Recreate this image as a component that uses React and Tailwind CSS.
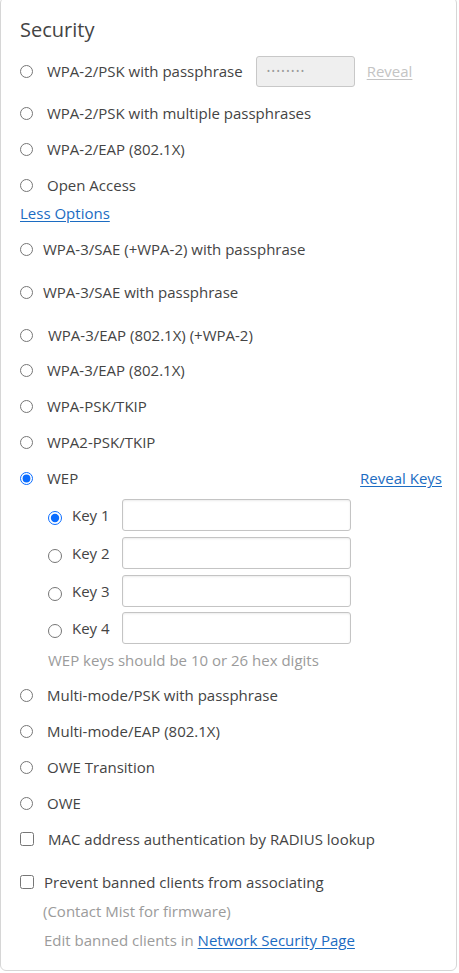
import React, { useState } from 'react';

// Security section of a WLAN settings card.

const FONT = { fontFamily: '"Open Sans", "Liberation Sans", sans-serif' };

function Radio({ checked, onChange, className = '' }) {
  return (
    <input
      type="radio"
      checked={checked}
      onChange={onChange}
      className={`m-0 h-[13px] w-[13px] shrink-0 accent-[#0a6cff] ${className}`}
    />
  );
}

function Option({ id, label, mt, gap = 'ml-[14px]', value, setValue, right }) {
  return (
    <div className={`flex h-[24px] items-center ${mt}`}>
      <Radio checked={value === id} onChange={() => setValue(id)} />
      <span className={`${gap} text-[15px] text-[#444]`}>{label}</span>
      {right}
    </div>
  );
}

export default function App() {
  const [mode, setMode] = useState('wep');
  const [key, setKey] = useState(1);
  const [mac, setMac] = useState(false);
  const [ban, setBan] = useState(false);

  return (
    <div className="min-h-screen bg-white" style={FONT}>
      <div className="-mt-[3px] w-[457px] rounded-md border border-[#d6d6d6] pb-[20px] pl-[19px] pr-[14px] pt-[18px]">
        <div className="flex h-[28px] items-center text-[20px] text-[#444]">Security</div>

        <div className="mt-[11px] flex h-[32px] items-center">
          <Radio checked={mode === 'psk'} onChange={() => setMode('psk')} />
          <span className="ml-[14px] text-[15px] text-[#444]">WPA-2/PSK with passphrase</span>
          <div className="ml-[13px] flex h-[31px] w-[99px] items-center rounded-[3px] border border-[#c8c8c8] bg-[#efefef] pl-[10px] text-[9px] tracking-[1.5px] text-[#9a9a9a]">
            ••••••••
          </div>
          <a className="ml-[12px] text-[15px] text-[#c4c4c4] underline underline-offset-2">Reveal</a>
        </div>

        <Option id="multi" label="WPA-2/PSK with multiple passphrases" mt="mt-[14px]" value={mode} setValue={setMode} />
        <Option id="eap2" label="WPA-2/EAP (802.1X)" mt="mt-[12px]" value={mode} setValue={setMode} />
        <Option id="open" label="Open Access" mt="mt-[12px]" value={mode} setValue={setMode} />

        <div className="mt-[6px] flex h-[20px] items-center">
          <a className="text-[15px] text-[#1c6cc2] underline underline-offset-2">Less Options</a>
        </div>

        <Option id="sae2" label="WPA-3/SAE (+WPA-2) with passphrase" mt="mt-[14px]" gap="ml-[10px]" value={mode} setValue={setMode} />
        <Option id="sae" label="WPA-3/SAE with passphrase" mt="mt-[19px]" gap="ml-[10px]" value={mode} setValue={setMode} />
        <Option id="eap3plus" label="WPA-3/EAP (802.1X) (+WPA-2)" mt="mt-[19px]" gap="ml-[15px]" value={mode} setValue={setMode} />
        <Option id="eap3" label="WPA-3/EAP (802.1X)" mt="mt-[11px]" value={mode} setValue={setMode} />
        <Option id="tkip" label="WPA-PSK/TKIP" mt="mt-[12px]" value={mode} setValue={setMode} />
        <Option id="tkip2" label="WPA2-PSK/TKIP" mt="mt-[12px]" value={mode} setValue={setMode} />
        <Option
          id="wep"
          label="WEP"
          mt="mt-[12px]"
          value={mode}
          setValue={setMode}
          right={<a className="ml-auto text-[15px] text-[#1c6cc2] underline underline-offset-2">Reveal Keys</a>}
        />

        {[1, 2, 3, 4].map((n, i) => (
          <div key={n} className={`ml-[28px] flex h-[32px] items-center ${i === 0 ? 'mt-[9px]' : i === 3 ? 'mt-[5px]' : 'mt-[6px]'}`}>
            <Radio checked={key === n} onChange={() => setKey(n)} className="mt-[6px] h-[14px] w-[14px]" />
            <span className="ml-[10px] w-[50px] text-[15px] text-[#444]">Key {n}</span>
            <input
              type="text"
              className="h-[32px] w-[229px] rounded-[3px] border border-[#c4c4c4] bg-white px-2 text-[14px] shadow-[inset_0_1px_2px_rgba(0,0,0,0.08)] outline-none"
            />
          </div>
        ))}

        <div className="mt-[6px] flex h-[20px] items-center pl-[28px] text-[15px] text-[#9b9b9b]">
          WEP keys should be 10 or 26 hex digits
        </div>

        <Option id="mmpsk" label="Multi-mode/PSK with passphrase" mt="mt-[13px]" value={mode} setValue={setMode} />
        <Option id="mmeap" label="Multi-mode/EAP (802.1X)" mt="mt-[12px]" value={mode} setValue={setMode} />
        <Option id="owet" label="OWE Transition" mt="mt-[12px]" value={mode} setValue={setMode} />
        <Option id="owe" label="OWE" mt="mt-[12px]" value={mode} setValue={setMode} />

        <div className="mt-[12px] flex h-[24px] items-center">
          <input type="checkbox" checked={mac} onChange={() => setMac(!mac)} className="m-0 h-[14px] w-[14px] shrink-0" />
          <span className="ml-[14px] text-[15px] text-[#444]">MAC address authentication by RADIUS lookup</span>
        </div>

        <div className="mt-[19px] flex h-[24px] items-center">
          <input type="checkbox" checked={ban} onChange={() => setBan(!ban)} className="m-0 h-[14px] w-[14px] shrink-0" />
          <span className="ml-[10px] text-[15px] text-[#444]">Prevent banned clients from associating</span>
        </div>
        <div className="mt-[7px] flex h-[20px] items-center pl-[23px] text-[15px] text-[#9b9b9b]">
          (Contact Mist for firmware)
        </div>
        <div className="mt-[9px] flex h-[20px] items-center pl-[24px] text-[15px] text-[#9b9b9b]">
          Edit banned clients in&nbsp;
          <a className="text-[#1c6cc2] underline underline-offset-2">Network Security Page</a>
        </div>
      </div>
    </div>
  );
}
